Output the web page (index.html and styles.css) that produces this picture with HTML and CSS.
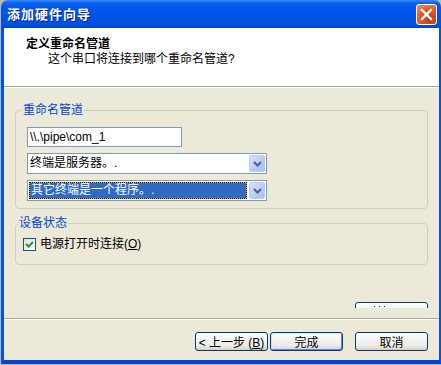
FILE: index.html
```html
<!DOCTYPE html>
<html lang="zh-CN">
<head>
    <meta charset="UTF-8">
    <title>添加硬件向导</title>
    <link rel="stylesheet" href="styles.css">
</head>
<body>
    <div class="window">
        <div class="titlebar">
            <span class="title">添加硬件向导</span>
            <span class="close">
                <svg width="13" height="13" viewBox="0 0 13 13">
                    <path d="M2 2 L11 11 M11 2 L2 11" stroke="#fff" stroke-width="2.4" stroke-linecap="square"/>
                </svg>
            </span>
        </div>
        <div class="frame">
            <div class="header">
                <div class="head-title">定义重命名管道</div>
                <div class="head-sub">这个串口将连接到哪个重命名管道?</div>
            </div>

            <div class="content">
                <fieldset class="group">
                    <legend>重命名管道</legend>
                    <div class="field">\\.\pipe\com_1</div>
                    <div class="combo">
                        <span class="combo-text">终端是服务器。.</span>
                        <span class="combo-btn">
                            <svg width="9" height="6" viewBox="0 0 9 6"><path d="M1 1 L4.5 4.5 L8 1" fill="none" stroke="#4D6185" stroke-width="2"/></svg>
                        </span>
                    </div>
                    <div class="combo combo-gap">
                        <span class="combo-text selected">其它终端是一个程序。.</span>
                        <span class="combo-btn">
                            <svg width="9" height="6" viewBox="0 0 9 6"><path d="M1 1 L4.5 4.5 L8 1" fill="none" stroke="#4D6185" stroke-width="2"/></svg>
                        </span>
                    </div>
                </fieldset>

                <fieldset class="group group-state">
                    <legend>设备状态</legend>
                    <label class="check">
                        <span class="check-box">
                            <svg width="11" height="11" viewBox="0 0 11 11"><path d="M2 5 L4.5 7.5 L9 3" fill="none" stroke="#21A121" stroke-width="2"/></svg>
                        </span>
                        <span>电源打开时连接(<u>O</u>)</span>
                    </label>
                </fieldset>

                <!-- 被下方分隔线遮住的按钮 -->
                <div class="clip">
                    <span class="btn btn-hidden"><span class="dots"></span></span>
                </div>
            </div>

            <div class="footer">
                <button class="btn" type="button">&lt; 上一步 (<u>B</u>)</button>
                <button class="btn btn-default" type="button">完成</button>
                <button class="btn btn-cancel" type="button">取消</button>
            </div>
        </div>
    </div>
</body>
</html>
```

FILE: styles.css
```css
/* 页面布局 */
* {
    box-sizing: border-box;
}

body {
    margin: 0;
    background-color: #b8b8b8;
    font-family: "Liberation Sans", "Noto Sans CJK SC", sans-serif;
    font-size: 12px;
    color: #000;
}

.window {
    margin-left: 1px;
    width: 440px;
    height: 364px;
    display: flex;
    flex-direction: column;
}

/* 标题栏 */
.titlebar {
    height: 28px;
    flex: none;
    display: flex;
    justify-content: space-between;
    align-items: flex-start;
    padding-left: 6px;
    border-radius: 7px 7px 0 0;
    background: linear-gradient(to bottom, #3d8cf5 0, #0a62ec 3px, #0058ee 8px, #0054e3 18px, #0050dc 25px, #0045cc 28px);
}

.title {
    color: #fff;
    font-weight: bold;
    font-size: 13px;
    letter-spacing: 1px;
    line-height: 29px;
    text-shadow: 1px 1px 0 #0a1e8c;
}

.close {
    width: 21px;
    height: 21px;
    margin: 4px 4px 0 0;
    border: 1px solid #fff;
    border-radius: 3px;
    background: radial-gradient(circle at 70% 80%, #c43c12, #e05a31 55%, #f09478);
    display: flex;
    align-items: center;
    justify-content: center;
}

/* 窗口主体 */
.frame {
    flex: 1;
    display: flex;
    flex-direction: column;
    background-color: #ece9d8;
    border-style: solid;
    border-color: #0054e3;
    border-width: 0 2px 4px 3px;
    border-bottom-color: #0442c9;
}

.header {
    height: 59px;
    flex: none;
    padding: 9px 0 0 22px;
    background-color: #fff;
    border-bottom: 1px solid #aca899;
}

.head-title {
    font-weight: bold;
    line-height: 15px;
}

.head-sub {
    padding-left: 22px;
    line-height: 14px;
}

.content {
    flex: 1;
    display: flex;
    flex-direction: column;
    padding: 16px 11px 0;
    border-top: 1px solid #fff;
}

/* 分组框 */
.group {
    margin: 0;
    padding: 11px 11px 7px;
    border: 1px solid #d0d0bf;
    border-radius: 4px;
    min-width: 0;
}

.group legend {
    margin-left: -5px;
    padding: 0 1px;
    line-height: 12px;
    color: #0046d5;
}

.group-state {
    margin-top: 8px;
    padding: 8px 7px 12px;
}

.field {
    width: 155px;
    height: 20px;
    padding-left: 2px;
    line-height: 18px;
    background-color: #fff;
    border: 1px solid #7f9db9;
}

.combo {
    width: 240px;
    height: 21px;
    margin-top: 6px;
    display: flex;
    padding: 1px;
    background-color: #fff;
    border: 1px solid #7f9db9;
}

.combo-gap {
    margin-top: 6px;
}

.combo-text {
    flex: 1;
    padding-left: 1px;
    line-height: 17px;
    white-space: nowrap;
    overflow: hidden;
}

.combo-text.selected {
    margin-right: 2px;
    border: 1px dotted #111;
    background: linear-gradient(#316ac5, #316ac5) padding-box, #e8a838 border-box;
    color: #fff;
    line-height: 15px;
}

.combo-btn {
    width: 16px;
    flex: none;
    display: flex;
    align-items: center;
    justify-content: center;
    border: 1px solid #b9cdf7;
    border-radius: 2px;
    background: linear-gradient(135deg, #d6e2fd, #b6cbf8 60%, #a9c1f6);
}

/* 复选框 */
.check {
    display: flex;
    align-items: center;
    gap: 4px;
    line-height: 15px;
}

.check-box {
    width: 13px;
    height: 13px;
    display: flex;
    align-items: center;
    justify-content: center;
    border: 1px solid #1c5180;
    background: linear-gradient(135deg, #dcdcd7, #fff);
}

/* 按钮 */
.btn {
    width: 73px;
    height: 19px;
    padding: 0;
    font-family: inherit;
    font-size: 12px;
    color: #000;
    border: 1px solid #003c74;
    border-radius: 3px;
    background: linear-gradient(to bottom, #fff 0, #f4f4f0 40%, #ecebe6 75%, #d6d0c5 100%);
    white-space: nowrap;
}

.btn-default {
    box-shadow: inset 1px 1px 0 #cee7ff, inset -1px -1px 0 #6982ee;
}

.btn-cancel {
    margin-left: 10px;
}

.clip {
    align-self: flex-end;
    height: 6px;
    margin-top: auto;
    margin-bottom: 10px;
    overflow: hidden;
}

.btn-hidden {
    display: block;
    padding: 3px 0 0 18px;
}

.dots {
    display: block;
    width: 11px;
    height: 1px;
    background: repeating-linear-gradient(to right, #333 0 1px, transparent 1px 5px);
}

.footer {
    flex: none;
    display: flex;
    justify-content: flex-end;
    gap: 2px;
    padding: 13px 11px 9px;
    border-top: 1px solid #aca899;
    box-shadow: inset 0 1px 0 #fff;
}
```
